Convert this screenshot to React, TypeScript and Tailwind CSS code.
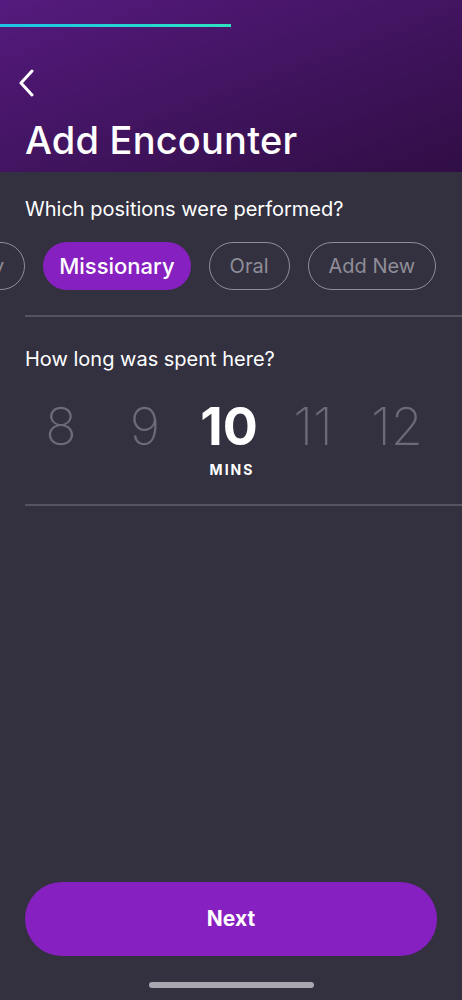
import React, { useState } from 'react';

const FONT = "font-['Inter','Noto_Sans',sans-serif]";

const positions = ['Doggy', 'Missionary', 'Oral', 'Add New'];
const minutes = [8, 9, 10, 11, 12];

export default function App() {
  const [selected, setSelected] = useState('Missionary');
  const [mins] = useState(10);

  return (
    <div className={`${FONT} w-[462px] h-[1000px] bg-[#33313f] flex flex-col overflow-hidden`}>
      {/* header */}
      <div className="h-[172px] bg-gradient-to-br from-[#551a7e] to-[#300e45] flex flex-col">
        <div className="pt-[24px]">
          <div className="h-[3px] w-[231px] bg-gradient-to-r from-[#1fc3e6] to-[#2fe3c0]" />
        </div>
        <button className="mt-[41px] ml-[17px] w-[22px] h-[30px] text-white">
          <svg width="20" height="28" viewBox="0 0 20 28" fill="none">
            <path d="M15 2 L4 14 L15 26" stroke="white" strokeWidth="3" strokeLinecap="round" strokeLinejoin="round" />
          </svg>
        </button>
        <h1 className="mt-[20px] ml-[25px] text-[38px] leading-[44px] font-medium text-white tracking-[0.2px]">
          Add Encounter
        </h1>
      </div>

      {/* positions */}
      <div className="pt-[24px] pl-[25px]">
        <p className="text-[20px] leading-[26px] text-white">Which positions were performed?</p>
      </div>
      <div className="mt-[20px] flex items-center gap-[18px] -ml-[79px]">
        {positions.map((p) => {
          const on = p === selected;
          return (
            <button
              key={p}
              onClick={() => setSelected(p)}
              className={
                on
                  ? 'h-[48px] px-[16px] rounded-full bg-[#8720c0] text-white text-[22px] font-medium shrink-0'
                  : 'h-[48px] px-[20px] rounded-full border border-[#8f8d98] text-[#8f8d98] text-[20px] shrink-0'
              }
            >
              {p}
            </button>
          );
        })}
      </div>
      <div className="mt-[25px] ml-[25px] h-[2px] bg-[#55535f]" />

      {/* duration */}
      <div className="pt-[29px] pl-[25px]">
        <p className="text-[20px] leading-[26px] text-white">How long was spent here?</p>
      </div>
      <div className="mt-[25px] ml-[19px] grid grid-cols-5 w-[420px]">
        {minutes.map((m) => (
          <div key={m} className="flex justify-center">
            <span
              className={
                m === mins
                  ? 'text-[52px] leading-[60px] font-bold text-white'
                  : 'text-[52px] leading-[60px] font-extralight text-[#6c6a76]'
              }
            >
              {m}
            </span>
          </div>
        ))}
      </div>
      <p className="mt-[2px] text-center text-[14px] font-bold tracking-[2px] text-white pl-[2px]">MINS</p>
      <div className="mt-[24px] ml-[25px] h-[2px] bg-[#55535f]" />

      <div className="flex-1" />

      <div className="px-[25px]">
        <button className="w-full h-[74px] rounded-full bg-[#8720c0] text-white text-[21px] font-bold">Next</button>
      </div>
      <div className="mt-[26px] mb-[12px] flex justify-center">
        <div className="w-[165px] h-[6px] rounded-full bg-[#a9a8b1]" />
      </div>
    </div>
  );
}
